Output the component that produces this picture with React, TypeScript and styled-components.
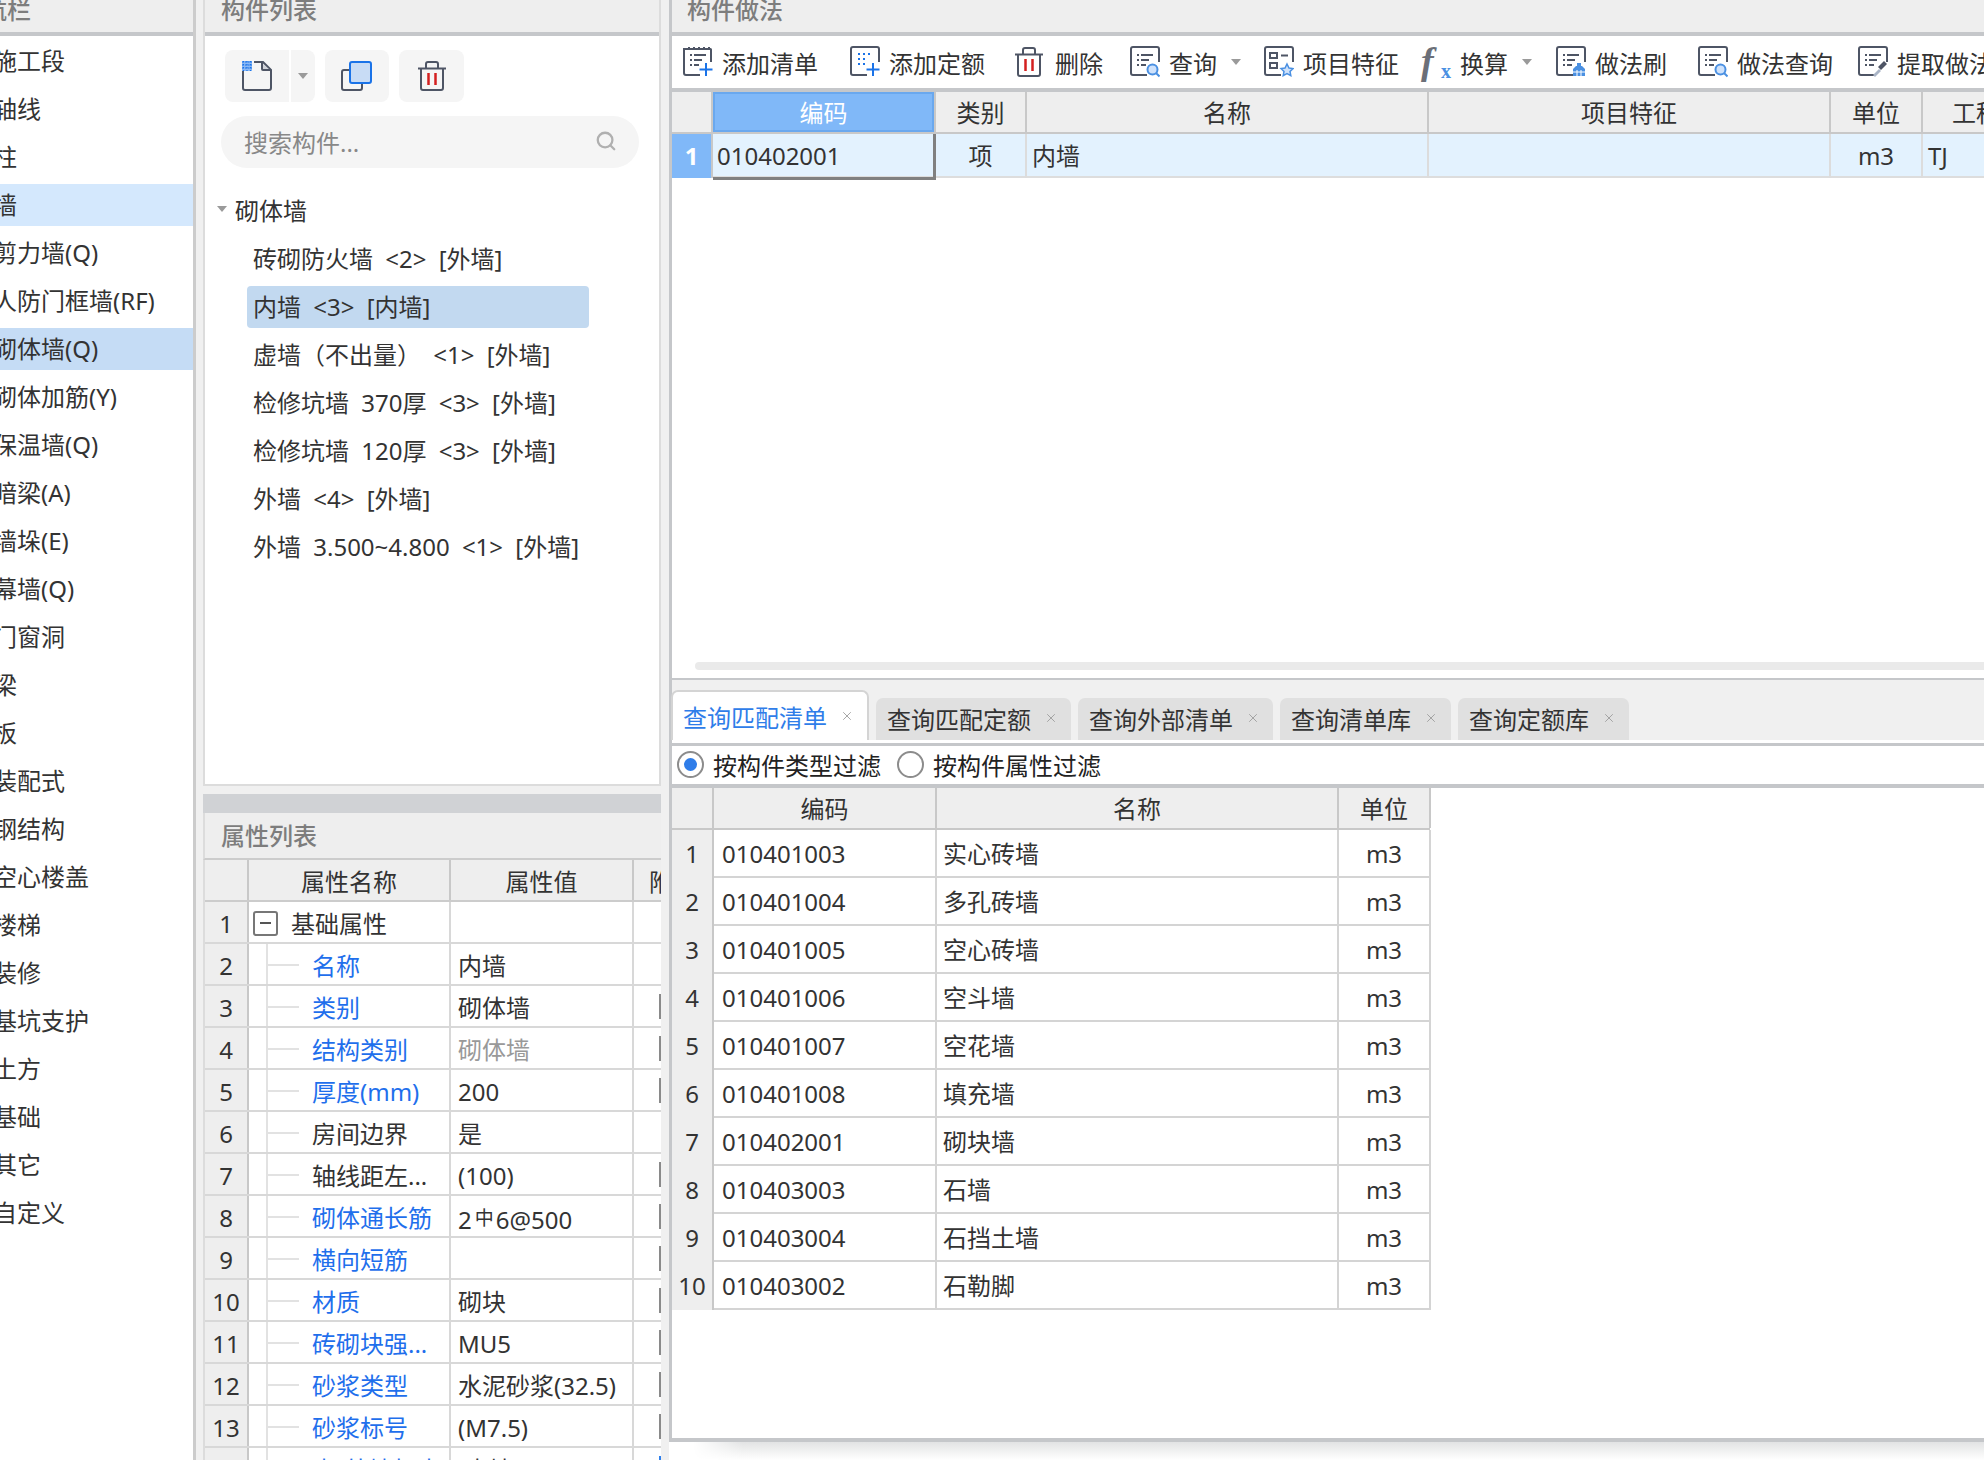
import React from "react";
import styled, { createGlobalStyle } from "styled-components";
import { Search, X } from "lucide-react";

const GlobalStyle = createGlobalStyle`
  html, body {
    margin: 0;
    padding: 0;
    background: #f0f0f0;
  }
  * {
    box-sizing: border-box;
  }
  body {
    font-family: "Noto Sans", "Noto Sans CJK SC", sans-serif;
    font-size: 24px;
    color: #333333;
  }
`;

const INK = "#4e5565";
const BLUE = "#1a73e8";
const SOFT_BLUE = "#4a90e2";

const navItems = [
  { label: "施工段" },
  { label: "轴线" },
  { label: "柱" },
  { label: "墙", tone: "soft" },
  { label: "剪力墙(Q)" },
  { label: "人防门框墙(RF)" },
  { label: "砌体墙(Q)", tone: "strong" },
  { label: "砌体加筋(Y)" },
  { label: "保温墙(Q)" },
  { label: "暗梁(A)" },
  { label: "墙垛(E)" },
  { label: "幕墙(Q)" },
  { label: "门窗洞" },
  { label: "梁" },
  { label: "板" },
  { label: "装配式" },
  { label: "钢结构" },
  { label: "空心楼盖" },
  { label: "楼梯" },
  { label: "装修" },
  { label: "基坑支护" },
  { label: "土方" },
  { label: "基础" },
  { label: "其它" },
  { label: "自定义" },
];

const components = [
  "砖砌防火墙 <2> [外墙]",
  "内墙 <3> [内墙]",
  "虚墙（不出量） <1> [外墙]",
  "检修坑墙 370厚 <3> [外墙]",
  "检修坑墙 120厚 <3> [外墙]",
  "外墙 <4> [外墙]",
  "外墙 3.500~4.800 <1> [外墙]",
];

const properties: { name: string; value?: React.ReactNode; link?: boolean; muted?: boolean; mark?: string }[] = [
  { name: "名称", value: "内墙", link: true },
  { name: "类别", value: "砌体墙", link: true, mark: "#8a8a8a" },
  { name: "结构类别", value: "砌体墙", link: true, muted: true, mark: "#8a8a8a" },
  { name: "厚度(mm)", value: "200", link: true, mark: "#8a8a8a" },
  { name: "房间边界", value: "是" },
  { name: "轴线距左...", value: "(100)", mark: "#8a8a8a" },
  { name: "砌体通长筋", value: "rebar", link: true, mark: "#8a8a8a" },
  { name: "横向短筋", link: true, mark: "#8a8a8a" },
  { name: "材质", value: "砌块", link: true, mark: "#8a8a8a" },
  { name: "砖砌块强...", value: "MU5", link: true, mark: "#8a8a8a" },
  { name: "砂浆类型", value: "水泥砂浆(32.5)", link: true, mark: "#8a8a8a" },
  { name: "砂浆标号", value: "(M7.5)", link: true, mark: "#8a8a8a" },
  { name: "内/外墙标志", value: "(内墙)", link: true, mark: "#2f80ed" },
];

const tabs = [
  { label: "查询匹配清单", active: true },
  { label: "查询匹配定额" },
  { label: "查询外部清单" },
  { label: "查询清单库" },
  { label: "查询定额库" },
];

const bills = [
  ["010401003", "实心砖墙"],
  ["010401004", "多孔砖墙"],
  ["010401005", "空心砖墙"],
  ["010401006", "空斗墙"],
  ["010401007", "空花墙"],
  ["010401008", "填充墙"],
  ["010402001", "砌块墙"],
  ["010403003", "石墙"],
  ["010403004", "石挡土墙"],
  ["010403002", "石勒脚"],
];

const Page = styled.div`
  display: flex;
  width: 1984px;
  height: 1460px;
  overflow: hidden;
  background: #f0f0f0;
`;

const NavPane = styled.aside`
  flex: 0 0 196px;
  margin-right: 7px;
  background: #ffffff;
  border-right: 3px solid #cccccc;
  overflow: hidden;
`;

const PaneHeader = styled.div<{ $indent?: number }>`
  height: 36px;
  padding-left: ${(p) => p.$indent ?? 16}px;
  background: #eeeeee;
  border-bottom: 4px solid #c5c7ca;
  color: #7d7d7d;
  font-weight: 500;
  line-height: 20px;
  white-space: nowrap;
  overflow: hidden;
`;

const NavTitle = styled.span`
  margin-left: -41px;
`;

const NavList = styled.ul`
  list-style: none;
  margin: 0;
  padding: 4px 0 0;
  display: flex;
  flex-direction: column;
  gap: 6px;
`;

const NavItem = styled.li<{ $tone?: string }>`
  height: 42px;
  line-height: 42px;
  padding-left: 0;
  text-indent: -7px;
  white-space: nowrap;
  background: ${(p) =>
    p.$tone === "soft" ? "#d4e8fd" : p.$tone === "strong" ? "#c5dcf5" : "transparent"};
`;

const MiddlePane = styled.section`
  flex: 0 0 458px;
  display: flex;
  flex-direction: column;
  overflow: hidden;
`;

const ComponentPanel = styled.div`
  height: 786px;
  flex: none;
  background: #ffffff;
  border: 2px solid #dcdcdc;
  border-top: 0;
  display: flex;
  flex-direction: column;
`;

const ButtonRow = styled.div`
  display: flex;
  margin: 14px 0 0 20px;
  height: 52px;
`;

const IconButton = styled.button<{ $width: number; $left?: number; $corners?: string }>`
  width: ${(p) => p.$width}px;
  margin: 0 0 0 ${(p) => p.$left ?? 0}px;
  padding: 0;
  border: 0;
  border-radius: ${(p) => p.$corners ?? "8px"};
  background: #f5f5f5;
  display: flex;
  align-items: center;
  justify-content: center;
`;

const Caret = styled.span`
  display: inline-block;
  width: 0;
  height: 0;
  border-left: 5px solid transparent;
  border-right: 5px solid transparent;
  border-top: 6px solid #9a9a9a;
`;

const SearchBox = styled.div`
  margin: 14px 20px 0 16px;
  height: 52px;
  border-radius: 26px;
  background: #f5f5f5;
  display: flex;
  align-items: center;
  justify-content: space-between;
  padding: 0 22px 2px 23px;
  color: #888888;
`;

const TreeGroup = styled.div`
  display: flex;
  align-items: center;
  height: 42px;
  margin-top: 20px;
  padding-left: 12px;
  gap: 8px;
`;

const TreeList = styled.ul`
  list-style: none;
  margin: 8px 0 0 42px;
  padding: 0;
  display: flex;
  flex-direction: column;
  gap: 6px;
`;

const TreeItem = styled.li<{ $selected?: boolean }>`
  width: 342px;
  height: 42px;
  line-height: 42px;
  padding-left: 6px;
  border-radius: 4px;
  white-space: pre;
  word-spacing: 6px;
  background: ${(p) => (p.$selected ? "#c2d9f0" : "transparent")};
`;

const DragBar = styled.div`
  flex: 0 0 19px;
  margin-top: 8px;
  background: #d0d2d5;
`;

const PropHeader = styled.div`
  flex: 0 0 45px;
  padding-left: 16px;
  background: #eeeeee;
  border-left: 2px solid #dcdcdc;
  border-bottom: 2px solid #cccccc;
  color: #7d7d7d;
  font-weight: 500;
  line-height: 45px;
`;

const PropTable = styled.div`
  flex: 1;
  background: #ffffff;
  border-left: 2px solid #dcdcdc;
  overflow: hidden;
`;

const PropRow = styled.div<{ $height: number; $line: string }>`
  display: grid;
  grid-template-columns: 44px 202px 183px 27px;
  height: ${(p) => p.$height}px;
  border-bottom: 2px solid ${(p) => p.$line};
  line-height: ${(p) => p.$height + 2}px;
`;

const HeadCell = styled.div<{ $selected?: boolean; $noLine?: boolean; $pad?: number }>`
  background: ${(p) => (p.$selected ? "#80b8f8" : "#eeeeee")};
  color: ${(p) => (p.$selected ? "#ffffff" : "#333333")};
  text-align: ${(p) => (p.$pad === undefined ? "center" : "left")};
  padding-left: ${(p) => p.$pad ?? 0}px;
  border-right: ${(p) => (p.$noLine ? "0" : "2px solid #c8c8c8")};
  box-shadow: ${(p) => (p.$selected ? "inset 0 0 0 2px #6aa8ee" : "none")};
  white-space: nowrap;
  overflow: hidden;
`;

const IndexCell = styled.div<{ $selected?: boolean }>`
  background: ${(p) => (p.$selected ? "#80b8f8" : "#eeeeee")};
  color: ${(p) => (p.$selected ? "#ffffff" : "#333333")};
  font-weight: ${(p) => (p.$selected ? 700 : 400)};
  text-align: center;
  border-right: 2px solid #c8c8c8;
  overflow: hidden;
`;

const PropName = styled.div<{ $link?: boolean }>`
  position: relative;
  padding-left: 63px;
  color: ${(p) => (p.$link ? "#1f6fec" : "#333333")};
  border-right: 2px solid #d8d8d8;
  white-space: nowrap;
  overflow: hidden;
  &::before {
    content: "";
    position: absolute;
    left: 17px;
    top: -2px;
    bottom: -2px;
    width: 2px;
    background: #e2e2e2;
  }
  &::after {
    content: "";
    position: absolute;
    left: 18px;
    top: 20px;
    width: 32px;
    height: 2px;
    background: #e2e2e2;
  }
`;

const GroupName = styled.div`
  display: flex;
  align-items: center;
  gap: 13px;
  padding: 3px 0 0 4px;
  line-height: 36px;
  border-right: 2px solid #d8d8d8;
`;

const Collapse = styled.span`
  width: 25px;
  height: 25px;
  margin-bottom: 1px;
  border: 2px solid #777777;
  border-radius: 3px;
  display: flex;
  align-items: center;
  justify-content: center;
  &::before {
    content: "";
    width: 11px;
    height: 2px;
    background: #555555;
  }
`;

const PropValue = styled.div<{ $muted?: boolean }>`
  padding-left: 7px;
  color: ${(p) => (p.$muted ? "#999999" : "#333333")};
  border-right: 2px solid #d8d8d8;
  white-space: nowrap;
  overflow: hidden;
`;

const Rebar = styled.span`
  font-size: 19px;
  margin: 0 2px 0 3px;
  vertical-align: 4px;
`;

const MarkCell = styled.div`
  display: flex;
  align-items: center;
  justify-content: flex-end;
  padding-right: 0;
`;

const Mark = styled.span<{ $color: string }>`
  width: 2px;
  height: 25px;
  background: ${(p) => p.$color};
`;

const WorkPane = styled.section`
  flex: 0 0 1315px;
  margin-left: 8px;
  display: flex;
  flex-direction: column;
  background: #ffffff;
`;

const WorkFrame = styled.div`
  height: 1442px;
  flex: none;
  display: flex;
  flex-direction: column;
  border-left: 3px solid #c5c7ca;
  border-bottom: 4px solid #c5c7ca;
`;

const Toolbar = styled.div`
  flex: 0 0 56px;
  display: flex;
  align-items: center;
  padding-left: 11px;
  background: #ffffff;
  border-bottom: 4px solid #c5c7ca;
  white-space: nowrap;
  overflow: hidden;
`;

const ToolItem = styled.div<{ $left: number }>`
  display: flex;
  align-items: center;
  flex: none;
  gap: 9px;
  margin-left: ${(p) => p.$left}px;
`;

const ToolLabel = styled.span<{ $left?: number }>`
  margin-left: ${(p) => p.$left ?? 0}px;
`;

const ToolCaret = styled(Caret)`
  margin-left: 5px;
`;

const FxGlyph = styled.span`
  position: relative;
  display: inline-block;
  width: 30px;
  height: 32px;
  font-family: "Liberation Serif", serif;
  font-style: italic;
  font-weight: 700;
  font-size: 38px;
  line-height: 30px;
  color: #6b6f78;
`;

const FxSub = styled.span`
  position: absolute;
  right: 0;
  bottom: 0;
  font-size: 20px;
  line-height: 14px;
  font-style: normal;
  font-weight: 700;
  color: ${SOFT_BLUE};
`;

const WorkRow = styled.div<{ $height: number; $line: string; $bg?: string }>`
  flex: none;
  display: grid;
  grid-template-columns: 41px 223px 91px 402px 402px 92px 61px;
  height: ${(p) => p.$height}px;
  line-height: ${(p) => p.$height - 1}px;
  background: ${(p) => p.$bg ?? "transparent"};
  border-bottom: 2px solid ${(p) => p.$line};
`;

const WorkCell = styled.div<{ $center?: boolean; $pad?: number; $noLine?: boolean }>`
  text-align: ${(p) => (p.$center ? "center" : "left")};
  padding-left: ${(p) => p.$pad ?? 0}px;
  border-right: ${(p) => (p.$noLine ? "0" : "2px solid #dcdcdc")};
`;

const ActiveCell = styled.div`
  position: relative;
  padding-left: 4px;
  margin-bottom: -2px;
  border-right: 3px solid #808080;
  border-bottom: 3px solid #808080;
`;

const WorkBlank = styled.div`
  flex: 0 0 500px;
  display: flex;
  flex-direction: column;
  justify-content: flex-end;
  padding: 0 0 8px 23px;
  background: #ffffff;
`;

const ScrollTrack = styled.div`
  height: 8px;
  border-radius: 4px 0 0 4px;
  background: #eaeaea;
`;

const TabBand = styled.div`
  flex: 0 0 68px;
  display: flex;
  flex-direction: column;
  background: #f0f0f0;
  border-top: 2px solid #c5c7ca;
  border-bottom: 3px solid #c5c7ca;
`;

const TabStrip = styled.div`
  flex: 0 0 50px;
  margin: 10px 0 0 -1px;
  display: flex;
  align-items: flex-end;
  gap: 7px;
`;

const TabEnd = styled.div`
  flex: 1;
  background: #ffffff;
`;

const Tab = styled.div<{ $active?: boolean }>`
  display: flex;
  align-items: center;
  height: ${(p) => (p.$active ? 50 : 42)}px;
  padding: ${(p) => (p.$active ? "0 0 0 10px" : "0 0 2px 11px")};
  color: ${(p) => (p.$active ? "#2f7de9" : "#333333")};
  background: ${(p) => (p.$active ? "#ffffff" : "#e0e0e0")};
  border: ${(p) => (p.$active ? "2px solid #d4d4d4" : "0")};
  border-bottom: 0;
  border-radius: 7px 7px 0 0;
  white-space: nowrap;
`;

const TabClose = styled.span`
  width: 40px;
  display: flex;
  justify-content: center;
  color: #9a9a9a;
`;

const FilterRow = styled.div`
  flex: 0 0 42px;
  display: flex;
  align-items: center;
  padding: 0 0 2px 5px;
  border-bottom: 4px solid #c5c7ca;
  background: #ffffff;
`;

const RadioLabel = styled.label<{ $left?: number }>`
  display: flex;
  align-items: center;
  gap: 9px;
  margin-left: ${(p) => p.$left ?? 0}px;
  color: #222222;
`;

const RadioMark = styled.span<{ $on?: boolean }>`
  width: 27px;
  height: 27px;
  border-radius: 50%;
  border: 2px solid #8c8c8c;
  background: #ffffff;
  display: flex;
  align-items: center;
  justify-content: center;
  &::before {
    content: "";
    width: 13px;
    height: 13px;
    border-radius: 50%;
    background: ${(p) => (p.$on ? "#2f7de9" : "transparent")};
  }
`;

const BillTable = styled.div`
  flex: 1;
  width: 758px;
  background: #ffffff;
`;

const BillRow = styled.div<{ $height: number; $line: string }>`
  display: grid;
  grid-template-columns: 42px 223px 402px 92px;
  height: ${(p) => p.$height}px;
  line-height: ${(p) => p.$height}px;
  border-bottom: 2px solid ${(p) => p.$line};
`;

const BillCell = styled.div<{ $center?: boolean; $pad?: number }>`
  text-align: ${(p) => (p.$center ? "center" : "left")};
  padding-left: ${(p) => p.$pad ?? 0}px;
  border-right: 2px solid #d4d4d4;
`;

const FootShadow = styled.div`
  flex: 1;
  margin-left: 24px;
  background: linear-gradient(180deg, #e2e3e4 0%, #f8f8f8 75%, #ffffff 100%);
  -webkit-mask-image: linear-gradient(90deg, transparent 0, #000 50px);
  mask-image: linear-gradient(90deg, transparent 0, #000 50px);
`;

const DocFrame = ({ children }: { children: React.ReactNode }) => (
  <svg width="30" height="32" viewBox="0 0 30 32" fill="none" style={{ flex: "none" }}>
    <path d="M17 29H3a2 2 0 0 1-2-2V3a2 2 0 0 1 2-2h24a2 2 0 0 1 2 2v13" stroke={INK} strokeWidth="2" />
    {children}
  </svg>
);

const ListLines = () => (
  <g stroke={INK} strokeWidth="2">
    <path d="M7 9h2M11 9h12M7 14h2M11 14h8M7 19h2M11 19h5" />
  </g>
);

const Plus = () => <path d="M23 17v13M16.500 23.500h13" stroke={BLUE} strokeWidth="2" />;

const AddBillIcon = () => (
  <svg width="30" height="32" viewBox="0 0 30 32" fill="none" style={{ flex: "none" }}>
    <path d="M17 29H3a2 2 0 0 1-2-2V3h26.500a.5.5 0 0 1 .5.5V16" stroke={INK} strokeWidth="2" />
    <path d="M6 1v3M11 1v3M16 1v3M21 1v3M26 1v3" stroke={INK} strokeWidth="2" />
    <ListLines />
    <Plus />
  </svg>
);

const AddQuotaIcon = () => (
  <DocFrame>
    <path d="M8 8h2M13 8h2M18 8h2M8 13h2M13 13h2M8 18h2M13 18h2" stroke={BLUE} strokeWidth="2" />
    <Plus />
  </DocFrame>
);

const Magnifier = () => (
  <g>
    <circle cx="22.500" cy="23.500" r="5" fill="#cfe2fb" stroke={SOFT_BLUE} strokeWidth="2" />
    <path d="M26 27l3.500 3.500" stroke={SOFT_BLUE} strokeWidth="2" />
  </g>
);

const QueryIcon = () => (
  <DocFrame>
    <ListLines />
    <Magnifier />
  </DocFrame>
);

const FeatureIcon = () => (
  <DocFrame>
    <rect x="6" y="7" width="7" height="5" stroke={INK} strokeWidth="2" />
    <rect x="6" y="17" width="7" height="5" stroke={INK} strokeWidth="2" />
    <path d="M17 9.500h7" stroke={INK} strokeWidth="2" />
    <path d="M23 18l2 4 4 .6-3 2.900.8 4.200-3.800-2-3.800 2 .8-4.200-3-2.900 4-.6z" fill="#cfe2fb" stroke={SOFT_BLUE} strokeWidth="1.500" />
  </DocFrame>
);

const BrushIcon = () => (
  <DocFrame>
    <ListLines />
    <path d="M21 17h4v3h-4z" fill={SOFT_BLUE} />
    <path d="M17 23l3-3h6l3 3v7H17z" fill={SOFT_BLUE} />
    <path d="M21 24v6M25 24v6M17 26h12" stroke="#ffffff" strokeWidth="1" />
  </DocFrame>
);

const PickIcon = () => (
  <DocFrame>
    <ListLines />
    <path d="M20 21l6-6 3 3-6 6z" fill={INK} />
    <path d="M21 23l2 2-6 6-2-2z" fill="#a9b4c6" />
  </DocFrame>
);

const TrashIcon = () => (
  <svg width="28" height="30" viewBox="0 0 28 30" fill="none" style={{ flex: "none" }}>
    <path d="M0 7.500h28" stroke={INK} strokeWidth="2" />
    <path d="M8 7V3a2 2 0 0 1 2-2h8a2 2 0 0 1 2 2v4" stroke={INK} strokeWidth="2" />
    <path d="M3 8v19a2 2 0 0 0 2 2h18a2 2 0 0 0 2-2V8" stroke={INK} strokeWidth="2" />
    <path d="M10.500 12v12M17.500 12v12" stroke="#d42020" strokeWidth="2.500" />
  </svg>
);

const NewDocIcon = () => (
  <svg width="30" height="30" viewBox="0 0 30 30" fill="none">
    <path d="M1 10v17a2 2 0 0 0 2 2h24a2 2 0 0 0 2-2V9l-8-8h-9" stroke={INK} strokeWidth="2" />
    <path d="M20 2v6a1 1 0 0 0 1 1h7" fill="#cfd2d8" stroke={INK} strokeWidth="2" />
    <rect x="0" y="0" width="10" height="10" fill="#8ab8f5" />
    <path d="M0 1h10M0 4h10M0 7h10M1.500 0v10M5 0v10M8.500 0v10" stroke={BLUE} strokeWidth="1.200" strokeDasharray="1.500 1.500" />
  </svg>
);

const CopyIcon = () => (
  <svg width="32" height="30" viewBox="0 0 32 30" fill="none">
    <path d="M8 9H3a2 2 0 0 0-2 2v16a2 2 0 0 0 2 2h16a2 2 0 0 0 2-2v-5" stroke={INK} strokeWidth="2" />
    <rect x="9" y="1" width="21" height="21" rx="2" fill="#c8dcf5" stroke={BLUE} strokeWidth="2" />
  </svg>
);

export default function App() {
  return (
    <Page>
      <GlobalStyle />
      <NavPane>
        <PaneHeader $indent={0}>
          <NavTitle>导航栏</NavTitle>
        </PaneHeader>
        <NavList>
          {navItems.map((item) => (
            <NavItem key={item.label} $tone={item.tone}>
              {item.label}
            </NavItem>
          ))}
        </NavList>
      </NavPane>

      <MiddlePane>
        <ComponentPanel>
          <PaneHeader>构件列表</PaneHeader>
          <ButtonRow>
            <IconButton $width={64} $corners="8px 0 0 8px">
              <NewDocIcon />
            </IconButton>
            <IconButton $width={24} $left={2} $corners="0 8px 8px 0">
              <Caret />
            </IconButton>
            <IconButton $width={64} $left={10}>
              <CopyIcon />
            </IconButton>
            <IconButton $width={65} $left={10}>
              <TrashIcon />
            </IconButton>
          </ButtonRow>
          <SearchBox>
            <span>搜索构件...</span>
            <Search size={22} color="#b0b0b0" strokeWidth={2.5} />
          </SearchBox>
          <TreeGroup>
            <Caret />
            <span>砌体墙</span>
          </TreeGroup>
          <TreeList>
            {components.map((name, i) => (
              <TreeItem key={name} $selected={i === 1}>
                {name}
              </TreeItem>
            ))}
          </TreeList>
        </ComponentPanel>

        <DragBar />
        <PropHeader>属性列表</PropHeader>
        <PropTable>
          <PropRow $height={42} $line="#cccccc">
            <HeadCell />
            <HeadCell>属性名称</HeadCell>
            <HeadCell>属性值</HeadCell>
            <HeadCell $pad={15} $noLine>
              附加
            </HeadCell>
          </PropRow>
          <PropRow $height={42} $line="#d8d8d8">
            <IndexCell>1</IndexCell>
            <GroupName>
              <Collapse />
              基础属性
            </GroupName>
            <PropValue />
            <MarkCell />
          </PropRow>
          {properties.map((prop, i) => (
            <PropRow key={prop.name} $height={42} $line="#d8d8d8">
              <IndexCell>{i + 2}</IndexCell>
              <PropName $link={prop.link}>{prop.name}</PropName>
              <PropValue $muted={prop.muted}>
                {prop.value === "rebar" ? (
                  <>
                    2<Rebar>中</Rebar>6@500
                  </>
                ) : (
                  prop.value
                )}
              </PropValue>
              <MarkCell>{prop.mark && <Mark $color={prop.mark} />}</MarkCell>
            </PropRow>
          ))}
        </PropTable>
      </MiddlePane>

      <WorkPane>
        <WorkFrame>
          <PaneHeader $indent={15}>构件做法</PaneHeader>
          <Toolbar>
            <ToolItem $left={0}>
              <AddBillIcon />
              添加清单
            </ToolItem>
            <ToolItem $left={32}>
              <AddQuotaIcon />
              添加定额
            </ToolItem>
            <ToolItem $left={30}>
              <TrashIcon />
              <ToolLabel $left={3}>删除</ToolLabel>
            </ToolItem>
            <ToolItem $left={27}>
              <QueryIcon />
              <ToolLabel>查询</ToolLabel>
              <ToolCaret />
            </ToolItem>
            <ToolItem $left={23}>
              <FeatureIcon />
              项目特征
            </ToolItem>
            <ToolItem $left={22}>
              <FxGlyph>
                f<FxSub>x</FxSub>
              </FxGlyph>
              <ToolLabel>换算</ToolLabel>
              <ToolCaret />
            </ToolItem>
            <ToolItem $left={24}>
              <BrushIcon />
              做法刷
            </ToolItem>
            <ToolItem $left={31}>
              <QueryIcon />
              做法查询
            </ToolItem>
            <ToolItem $left={25}>
              <PickIcon />
              提取做法
            </ToolItem>
          </Toolbar>
          <WorkRow $height={42} $line="#c8c8c8" $bg="#eeeeee">
            <HeadCell />
            <HeadCell $selected>编码</HeadCell>
            <HeadCell>类别</HeadCell>
            <HeadCell>名称</HeadCell>
            <HeadCell>项目特征</HeadCell>
            <HeadCell>单位</HeadCell>
            <HeadCell $pad={29} $noLine>
              工程量表达式
            </HeadCell>
          </WorkRow>
          <WorkRow $height={44} $line="#dddddd" $bg="#e3f2fe">
            <IndexCell $selected>1</IndexCell>
            <ActiveCell>010402001</ActiveCell>
            <WorkCell $center>项</WorkCell>
            <WorkCell $pad={5}>内墙</WorkCell>
            <WorkCell />
            <WorkCell $center>m3</WorkCell>
            <WorkCell $pad={5} $noLine>
              TJ
            </WorkCell>
          </WorkRow>
          <WorkBlank>
            <ScrollTrack />
          </WorkBlank>
          <TabBand>
            <TabStrip>
              {tabs.map((tab) => (
                <Tab key={tab.label} $active={tab.active}>
                  {tab.label}
                  <TabClose>
                    <X size={14} strokeWidth={1.5} />
                  </TabClose>
                </Tab>
              ))}
            </TabStrip>
            <TabEnd />
          </TabBand>
          <FilterRow>
            <RadioLabel>
              <RadioMark $on />
              按构件类型过滤
            </RadioLabel>
            <RadioLabel $left={16}>
              <RadioMark />
              按构件属性过滤
            </RadioLabel>
          </FilterRow>
          <BillTable>
            <BillRow $height={42} $line="#c8c8c8">
              <HeadCell />
              <HeadCell>编码</HeadCell>
              <HeadCell>名称</HeadCell>
              <HeadCell>单位</HeadCell>
            </BillRow>
            {bills.map(([code, name], i) => (
              <BillRow key={code} $height={48} $line="#d4d4d4">
                <IndexCell>{i + 1}</IndexCell>
                <BillCell $pad={8}>{code}</BillCell>
                <BillCell $pad={6}>{name}</BillCell>
                <BillCell $center>m3</BillCell>
              </BillRow>
            ))}
          </BillTable>
        </WorkFrame>
        <FootShadow />
      </WorkPane>
    </Page>
  );
}
